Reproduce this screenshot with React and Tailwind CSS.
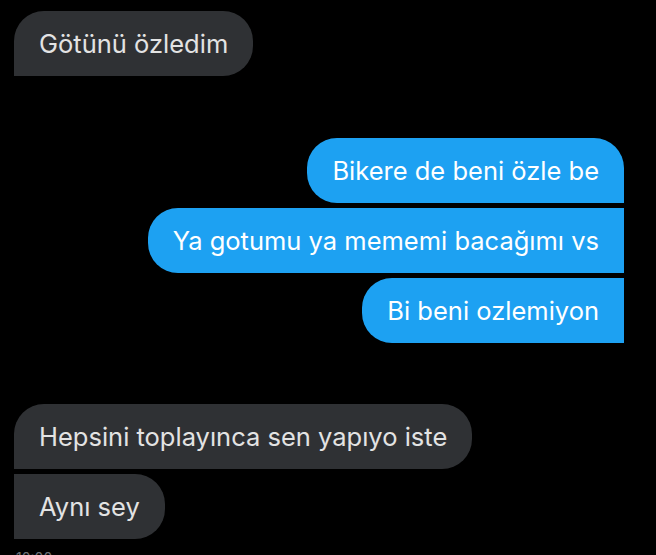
export default function App() {
  const font = { fontFamily: "Inter, 'Noto Sans', sans-serif" };
  const gray = "bg-[#2f3134] text-[#e3e3e3]";
  const blue = "bg-[#1da1f2] text-white";
  const base = "h-[65px] flex items-center px-[25px] text-[25.5px] leading-none whitespace-nowrap";

  return (
    <div style={font} className="w-[656px] h-[555px] overflow-hidden bg-black pl-[14px] pr-[32px] pt-[11px]">
      {/* received */}
      <div className="flex flex-col items-start">
        <div className={`${base} ${gray} rounded-[30px] rounded-bl-none`}>Götünü özledim</div>
      </div>

      {/* sent */}
      <div className="flex flex-col items-end gap-[5px] mt-[62px]">
        <div className={`${base} ${blue} rounded-[30px] rounded-br-none`}>Bikere de beni özle be</div>
        <div className={`${base} ${blue} rounded-l-[30px]`}>Ya gotumu ya mememi bacağımı vs</div>
        <div className={`${base} ${blue} rounded-l-[30px]`}>Bi beni ozlemiyon</div>
      </div>

      {/* received */}
      <div className="flex flex-col items-start gap-[5px] mt-[61px]">
        <div className={`${base} ${gray} rounded-[30px] rounded-bl-none`}>Hepsini toplayınca sen yapıyo iste</div>
        <div className={`${base} ${gray} rounded-r-[30px]`}>Aynı sey</div>
        <span className="mt-[3px] ml-[2px] text-[14px] text-[#6b7075]">10:00</span>
      </div>
    </div>
  );
}
